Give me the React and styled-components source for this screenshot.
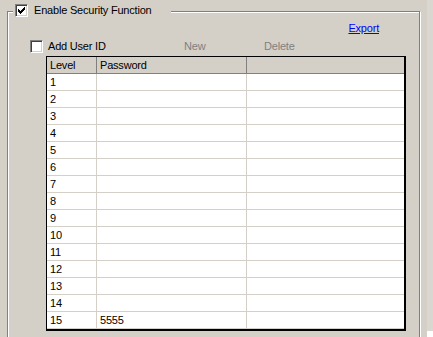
import React from 'react'
import styled, { createGlobalStyle } from 'styled-components'

const GlobalStyle = createGlobalStyle`
  html, body {
    margin: 0;
    padding: 0;
    background: #d4d0c8;
    overflow: hidden;
  }
  body {
    font-family: "Liberation Sans", Arial, sans-serif;
    font-size: 11px;
    letter-spacing: -0.2px;
    color: #000;
  }
`

const rows = [
  { level: 1, password: '' },
  { level: 2, password: '' },
  { level: 3, password: '' },
  { level: 4, password: '' },
  { level: 5, password: '' },
  { level: 6, password: '' },
  { level: 7, password: '' },
  { level: 8, password: '' },
  { level: 9, password: '' },
  { level: 10, password: '' },
  { level: 11, password: '' },
  { level: 12, password: '' },
  { level: 13, password: '' },
  { level: 14, password: '' },
  { level: 15, password: '5555' },
]

// classic 7x7 check mark, one rect per pixel run
const checkRuns = [
  [6, 0, 1], [5, 1, 2], [0, 2, 1], [4, 2, 3],
  [0, 3, 2], [3, 3, 3], [0, 4, 5], [1, 5, 3], [2, 6, 1],
]

const CheckBox = ({ checked }) => (
  <Box>
    {checked && (
      <svg width="7" height="7" viewBox="0 0 7 7" shapeRendering="crispEdges">
        {checkRuns.map(([x, y, w], i) => (
          <rect key={i} x={x} y={y} width={w} height="1" fill="#000" />
        ))}
      </svg>
    )}
  </Box>
)

const App = () => {
  return (
    <Page>
      <GlobalStyle />
      <Main>
        <GroupBox>
          <Legend>
            <CheckBox checked />
            <span>Enable Security Function</span>
          </Legend>
          <ExportRow>
            <LinkText href="#">Export</LinkText>
          </ExportRow>
          <Toolbar>
            <CheckLabel>
              <CheckBox />
              <span>Add User ID</span>
            </CheckLabel>
            <Disabled>New</Disabled>
            <Disabled>Delete</Disabled>
          </Toolbar>
          <Table>
            <HeaderRow>
              <HeadCell>Level</HeadCell>
              <HeadCell>Password</HeadCell>
              <HeadCell last />
            </HeaderRow>
            {rows.map((r) => (
              <Row key={r.level}>
                <Cell>{r.level}</Cell>
                <Cell>{r.password}</Cell>
                <Cell last />
              </Row>
            ))}
          </Table>
        </GroupBox>
      </Main>
      <Strip>
        <StripTop />
        <StripBottom />
      </Strip>
    </Page>
  )
}

const Page = styled.div`
  display: flex;
  width: 433px;
  height: 337px;
  overflow: hidden;
`

const Main = styled.div`
  width: 427px;
  flex: none;
`

const Strip = styled.div`
  flex: 1;
  display: flex;
  flex-direction: column;
`

const StripTop = styled.div`
  height: 331px;
  background: #dad7d1;
`

const StripBottom = styled.div`
  flex: 1;
  background: #ffffff;
`

const GroupBox = styled.div`
  position: relative;
  box-sizing: border-box;
  margin: 11px 0 0 7px;
  width: 413px;
  height: 360px;
  border: 1px solid #808080;
  box-shadow: inset 1px 1px 0 #fff, 1px 1px 0 #fff;
  padding: 10px 0 0 22px;
`

const Legend = styled.div`
  position: absolute;
  top: -8px;
  left: 5px;
  width: 158px;
  height: 13px;
  box-sizing: border-box;
  padding-left: 2px;
  display: flex;
  align-items: center;
  gap: 6px;
  background: #d4d0c8;
  line-height: 13px;
`

const Box = styled.div`
  box-sizing: border-box;
  width: 13px;
  height: 13px;
  flex: none;
  background: #fff;
  border: 1px solid;
  border-color: #808080 #fff #fff #808080;
  box-shadow: inset 1px 1px 0 #404040, inset -1px -1px 0 #d4d0c8;
  display: flex;
  align-items: flex-start;
  justify-content: flex-start;
  padding: 2px 0 0 2px;

  svg {
    display: block;
  }
`

const ExportRow = styled.div`
  display: flex;
  justify-content: flex-end;
  height: 13px;
  line-height: 13px;
  padding-right: 40px;
`

const LinkText = styled.a`
  color: #0000ff;
  text-decoration: underline;
`

const Toolbar = styled.div`
  display: grid;
  grid-template-columns: 154px 80px auto;
  height: 13px;
  line-height: 13px;
  margin-top: 5px;
`

const CheckLabel = styled.div`
  display: flex;
  align-items: center;
  gap: 5px;
`

const Disabled = styled.span`
  color: #808080;
`

const Table = styled.div`
  box-sizing: border-box;
  width: 360px;
  margin: 3px 0 0 16px;
  background: #fff;
  border-style: solid;
  border-color: #000;
  border-width: 1px 2px 2px 1px;
`

const HeaderRow = styled.div`
  display: grid;
  grid-template-columns: 50px 150px 1fr;
  background: #d4d0c8;
`

const HeadCell = styled.div`
  box-sizing: border-box;
  height: 17px;
  line-height: 16px;
  padding-left: 3px;
  border-bottom: 1px solid #808080;
  border-right: ${(p) => (p.last ? 'none' : '1px solid #808080')};
`

const Row = styled.div`
  display: grid;
  grid-template-columns: 50px 150px 1fr;
`

const Cell = styled.div`
  box-sizing: border-box;
  height: 17px;
  line-height: 16px;
  padding-left: 3px;
  border-bottom: 1px solid #d4d0c8;
  border-right: ${(p) => (p.last ? 'none' : '1px solid #d4d0c8')};
`

export default App
